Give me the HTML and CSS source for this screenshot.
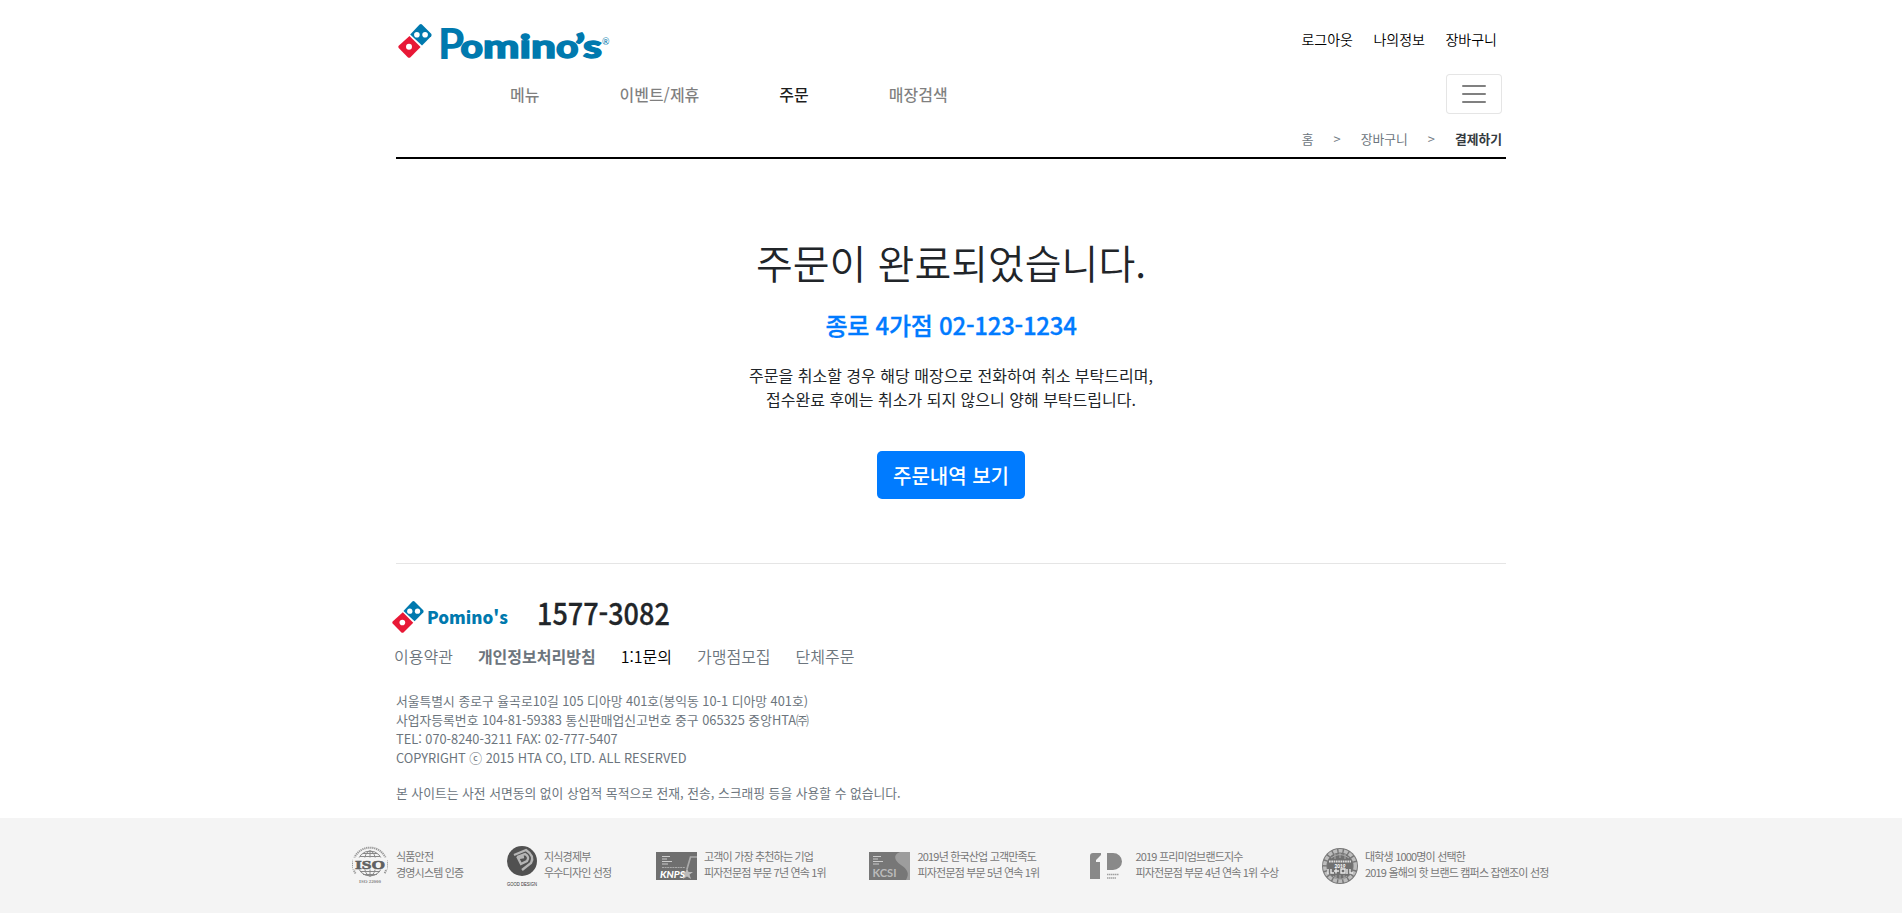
FILE: index.html
```html
<!DOCTYPE html>
<html lang="ko">
<head>
<meta charset="utf-8">
<title>Pomino's</title>
<link rel="stylesheet" href="styles.css">
</head>
<body>
<svg class="defs" width="0" height="0">
  <symbol id="tiles" viewBox="0 0 34 34">
    <path fill="#0079ae" d="M21.6.6Q23 -.4 24.2.7L33.2 9.7Q34 11 33.2 12.2L24 21.6 12.2 10.6Z"/>
    <path fill="#e81836" d="M11.5 12 22.6 23 12.2 33.4Q11.1 34.2 10 33.4L.7 24Q-.1 22.8.7 21.8Z"/>
    <circle cx="18.9" cy="10.8" r="2.8" fill="#fff"/><circle cx="27.1" cy="10.8" r="2.8" fill="#fff"/>
    <circle cx="11" cy="22.8" r="3" fill="#fff"/>
  </symbol>
</svg>
<div class="container">
  <header class="header">
    <div class="top">
      <svg class="logo" width="216" height="64" viewBox="396 6 216 64">
        <use href="#tiles" x="398" y="24" width="34" height="34"/>
        <text class="logo-p" x="438" y="59">P</text>
        <text class="logo-rest" y="57.700"><tspan x="460.500" textLength="22.500" lengthAdjust="spacingAndGlyphs">o</tspan><tspan x="483" textLength="36.500" lengthAdjust="spacingAndGlyphs">m</tspan><tspan x="519.500" textLength="11.500" lengthAdjust="spacingAndGlyphs">i</tspan><tspan x="531" textLength="25" lengthAdjust="spacingAndGlyphs">n</tspan><tspan x="556" textLength="22.500" lengthAdjust="spacingAndGlyphs">o</tspan><tspan x="575" textLength="10" lengthAdjust="spacingAndGlyphs">’</tspan><tspan x="583" textLength="19" lengthAdjust="spacingAndGlyphs">s</tspan></text>
        <text class="logo-r" x="602" y="45">®</text>
      </svg>
      <nav class="user-links"><a>로그아웃</a><a>나의정보</a><a>장바구니</a></nav>
    </div>
    <div class="main-row">
      <nav class="main-nav"><a>메뉴</a><a>이벤트/제휴</a><a class="active">주문</a><a>매장검색</a></nav>
      <button class="toggler"><i></i><i></i><i></i></button>
    </div>
    <div class="crumbs"><span>홈</span><span>&gt;</span><span>장바구니</span><span>&gt;</span><b>결제하기</b></div>
  </header>
  <main class="complete">
    <h1>주문이 완료되었습니다.</h1>
    <p class="shop">종로 4가점 02-123-1234</p>
    <p class="notice">주문을 취소할 경우 해당 매장으로 전화하여 취소 부탁드리며,<br>접수완료 후에는 취소가 되지 않으니 양해 부탁드립니다.</p>
    <button class="btn">주문내역 보기</button>
  </main>
  <footer class="footer">
    <div class="contact">
      <svg width="32" height="32"><use href="#tiles" width="32" height="32"/></svg>
      <span class="brand">Pomino's</span>
      <span class="tel">1577-3082</span>
    </div>
    <nav class="foot-links"><a>이용약관</a><a class="strong">개인정보처리방침</a><a class="dark">1:1문의</a><a>가맹점모집</a><a>단체주문</a></nav>
    <p class="info">서울특별시 종로구 율곡로10길 105 디아망 401호(봉익동 10-1 디아망 401호)<br>사업자등록번호 104-81-59383 통신판매업신고번호 중구 065325 중앙HTA㈜<br>TEL: 070-8240-3211 FAX: 02-777-5407<br>COPYRIGHT ⓒ 2015 HTA CO, LTD. ALL RESERVED</p>
    <p class="info">본 사이트는 사전 서면동의 없이 상업적 목적으로 전재, 전송, 스크래핑 등을 사용할 수 없습니다.</p>
  </footer>
</div>
<div class="awards">
  <div class="award a1">
    <svg width="40" height="42" viewBox="0 1.500 40 42" fill="none" stroke="#888">
      <path d="M5.500 30A17 17 0 1 1 34.500 30" stroke-width="2" stroke-dasharray="1.3 .7" stroke="#999"/>
      <g stroke-width="1"><circle cx="20" cy="20" r="12.5"/><ellipse cx="20" cy="20" rx="6" ry="12.5"/><path d="M20 7v26M10 13h20M10 28h20M13 10h14M13 31h14"/></g>
      <path d="M3 14h34v12H3z" fill="#f4f4f4" stroke="none"/>
      <text class="iso" x="5" y="25" textLength="30" lengthAdjust="spacingAndGlyphs">ISO</text>
      <text class="iso-no" x="9" y="39" textLength="22" lengthAdjust="spacingAndGlyphs">ISO 22000</text>
    </svg>
    <p>식품안전<br>경영시스템 인증</p>
  </div>
  <div class="award a2">
    <svg width="30" height="44" viewBox="0 -2 30 44">
      <circle cx="15" cy="15" r="15" fill="#515151"/>
      <path d="M7 9 19 4Q28 10 24 17L15 24M10 11 18 8Q23 11 20 15L14 18 11 12 17 11" fill="none" stroke="#b5b5b5" stroke-width="2.4"/>
      <text class="gd" x="0" y="39.500" textLength="30" lengthAdjust="spacingAndGlyphs">GOOD DESIGN</text>
    </svg>
    <p>지식경제부<br>우수디자인 선정</p>
  </div>
  <div class="award a3">
    <svg width="41" height="28" viewBox="0 0 41 28">
      <path fill="#6f6f6f" d="M0 0h41v28H0z"/>
      <path d="M6 4.500h8M6 7h5M6 9.500h10M6 12h6" stroke="#ccc"/><path d="M6 15.500h23" stroke="#aaa" stroke-dasharray="2 .6"/>
      <path d="M31 17 34.500 5H41" stroke="#aaa" stroke-width="1.7" fill="none"/>
      <path d="m31 16 1.500 4H37l-3.500 2.500L35 27l-4-2.500L27 27l1.500-4.500L25 20h4.500Z" fill="#bbb"/>
      <text class="knps" x="4" y="25.500" textLength="25" lengthAdjust="spacingAndGlyphs">KNPS</text>
    </svg>
    <p>고객이 가장 추천하는 기업<br>피자전문점 부문 7년 연속 1위</p>
  </div>
  <div class="award a4">
    <svg width="41" height="28" viewBox="0 0 41 28">
      <path fill="#777" d="M0 0h41v28H0z"/>
      <path fill="#9d9d9d" d="M41 0H31C23 3 26 9 32 13c6 4 9 8 5 15h4Z"/>
      <path d="M4 4.500h8M4 7h5M4 9.500h10M4 12h6" stroke="#ccc"/>
      <text class="kcsi" x="3.500" y="25" textLength="24" lengthAdjust="spacingAndGlyphs">KCSI</text>
    </svg>
    <p>2019년 한국산업 고객만족도<br>피자전문점 부문 5년 연속 1위</p>
  </div>
  <div class="award a5">
    <svg width="33" height="28" viewBox="0 0 33 28" fill="#898989">
      <path d="M0 4Q0 1 3 1h8v2L6 8v2h4v17H0ZM17 1h6a9 8.500 0 0 1 0 17h-6Z"/>
      <path d="M17 22.500h12M17 26h9" stroke="#a0a0a0" stroke-width="1.400" stroke-dasharray="1.500 .5"/>
    </svg>
    <p>2019 프리미엄브랜드지수<br>피자전문점 부문 4년 연속 1위 수상</p>
  </div>
  <div class="award a6">
    <svg width="36" height="36" viewBox="0 0 36 36">
      <circle cx="18" cy="18" r="18" fill="#777"/>
      <circle cx="18" cy="18" r="15.300" fill="none" stroke="#bcbcbc" stroke-width="3.500" stroke-dasharray="4 1.400"/>
      <circle cx="18" cy="18" r="12.500" fill="#707070"/>
      <path d="M9 10q9-7 18 0M11 28q7 7 14 0M13 6v5M18 5v5M23 6v5M14 27v4M18 27v5M22 27v4" fill="none" stroke="#aaa"/>
      <path d="M7 13.500h22" stroke="#ddd" stroke-width="2" stroke-dasharray="1.700 .6"/>
      <text class="yr" x="12.500" y="20" textLength="11" lengthAdjust="spacingAndGlyphs">2019</text>
      <path d="M6 21v5M9 21v4h3M14 20.500v5M12 23h5M19 21h4v4h-4ZM25 21v5M28 21v4h3" fill="none" stroke="#e8e8e8" stroke-width="1.400"/>
    </svg>
    <p>대학생 1000명이 선택한<br>2019 올해의 핫 브랜드 캠퍼스 잡앤조이 선정</p>
  </div>
</div>
</body>
</html>
```
FILE: styles.css
```css
* { box-sizing: border-box; }
body { margin: 0; background: #fff; color: #212529; font: 400 16px/1.5 "Noto Sans CJK KR", sans-serif; overflow: hidden; }
h1, p { margin: 0; }
svg { display: block; flex: none; overflow: visible; }
.defs { position: absolute; }
.container { width: 1110px; margin: 0 auto; }
.header { height: 159px; border-bottom: 2px solid #000; }
.top { display: flex; justify-content: space-between; height: 74px; padding-top: 6px; }
.logo text { fill: #0079ae; font-family: Lato, sans-serif; font-weight: 900; }
.logo .logo-p { font-size: 42px; }
.logo .logo-rest { font-size: 32px; stroke: #0079ae; stroke-width: 1.4px; }
.logo .logo-r { font-size: 9px; font-weight: 400; }
.user-links { display: flex; gap: 20.5px; padding: 23px 9px 0 0; font-size: 14px; line-height: 21px; font-weight: 350; color: #000; }
.main-row { display: flex; justify-content: space-between; height: 40px; padding: 0 4px 0 114px; }
.main-nav { display: flex; gap: 80px; line-height: 40px; font-weight: 500; color: rgba(0,0,0,.5); }
.main-nav .active { color: rgba(0,0,0,.9); }
.toggler { display: flex; flex-direction: column; align-items: center; justify-content: center; gap: 6px; width: 56px; height: 40px; padding: 0; background: #fff; border: 1px solid rgba(0,0,0,.1); border-radius: 4px; }
.toggler i { width: 24px; height: 2px; border-radius: 1px; background: #808080; }
.crumbs { display: flex; justify-content: flex-end; gap: 20px; padding: 15px 4px 0 0; font-size: 12.8px; line-height: 20px; color: #6c757d; }
.crumbs b { color: #343a40; }
.complete { display: flex; flex-direction: column; align-items: center; height: 405px; padding-top: 79px; border-bottom: 1px solid #e5e5e5; text-align: center; }
.complete h1 { font-size: 40px; line-height: 48px; font-weight: 350; }
.shop { margin-top: 24px; font-size: 24px; line-height: 29px; font-weight: 500; letter-spacing: -.25px; color: #007bff; -webkit-text-stroke: .3px #007bff; }
.notice { margin-top: 24px; }
.btn { margin-top: 40px; width: 148px; height: 48px; padding: 1px 0 0; border: 0; border-radius: 5px; background: #007bff; color: #fff; font: 500 20px/30px "Noto Sans CJK KR", sans-serif; }
.footer { height: 254px; padding-top: 32px; }
.contact { display: flex; align-items: flex-start; height: 48px; margin-left: -4px; padding-top: 5px; }
.brand { margin: 4px 0 0 3px; font: 900 17px/24px "Noto Sans CJK KR", sans-serif; color: #0079ae; }
.tel { margin: -7px 0 0 29px; font-size: 30px; line-height: 36px; font-weight: 500; transform: scaleX(.9); transform-origin: left; -webkit-text-stroke: .3px #212529; }
.foot-links { display: flex; gap: 25px; height: 24px; margin: 0 0 23px -2px; font-weight: 350; color: #6c757d; }
.foot-links .strong { font-weight: 700; }
.foot-links .dark { color: #000; }
.info { margin-bottom: 16px; font-size: 12.8px; line-height: 19px; color: #6c757d; }
.awards { display: flex; height: 95px; background: #f4f4f4; }
.award { display: flex; align-items: center; height: 96px; }
.award p { margin-top: -4px; font-size: 11px; line-height: 16px; letter-spacing: -.82px; color: #777; white-space: nowrap; }
.award svg text { letter-spacing: 0; }
.a1 { margin-left: 350px; width: 157px; gap: 6px; }
.a2 { width: 149px; gap: 7px; }
.a3 { width: 213px; gap: 7px; }
.a4 { width: 221px; gap: 7.5px; }
.a5 { width: 232px; gap: 12.5px; }
.a6 { gap: 7px; }
.iso { font: 900 13px "Liberation Serif", serif; fill: #606060; stroke: #606060; stroke-width: .6px; }
.iso-no { font: 700 5px "Liberation Serif", serif; fill: #888; stroke: none; }
.gd { font: 5.5px "Liberation Sans", sans-serif; fill: #333; }
.knps { font: italic 900 10px Lato, sans-serif; fill: #fff; }
.kcsi { font: 700 11px Lato, sans-serif; fill: #bbb; }
.yr { font: 900 5px Lato, sans-serif; fill: #fff; }
```
